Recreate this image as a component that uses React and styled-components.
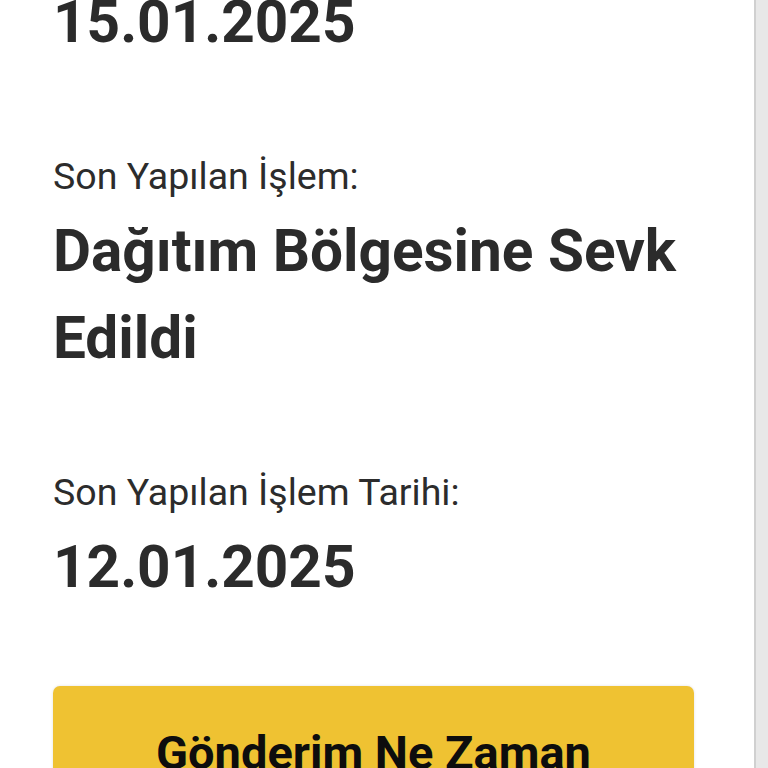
import React from "react";
import styled, { createGlobalStyle } from "styled-components";

const GlobalStyle = createGlobalStyle`
  html, body {
    margin: 0;
    padding: 0;
    background: #ffffff;
    overflow: hidden;
  }
  body {
    font-family: Roboto, "Liberation Sans", sans-serif;
  }
`;

const items = [
  { label: null, value: "15.01.2025" },
  { label: "Son Yapılan İşlem:", value: "Dağıtım Bölgesine Sevk Edildi" },
  { label: "Son Yapılan İşlem Tarihi:", value: "12.01.2025" },
];

const App = () => {
  return (
    <Page>
      <GlobalStyle />
      <Content>
        {items.map((item, i) => (
          <Section key={i}>
            {item.label && <Label>{item.label}</Label>}
            <Value>{item.value}</Value>
          </Section>
        ))}
        <ActionButton type="button">Gönderim Ne Zaman</ActionButton>
      </Content>
      <ScrollTrack />
    </Page>
  );
};

const Page = styled.div`
  display: flex;
  height: 768px;
  overflow: hidden;
`;

const Content = styled.main`
  flex: 1;
  display: flex;
  flex-direction: column;
  gap: 85px;
  padding: 0 60px 0 53px;
  margin-top: -21px;
`;

const Section = styled.section`
  display: flex;
  flex-direction: column;
  gap: 7px;
`;

const Label = styled.div`
  font-size: 37.5px;
  line-height: 50px;
  font-weight: 400;
  color: #2c2c2c;
`;

const Value = styled.div`
  font-size: 58.5px;
  line-height: 87px;
  font-weight: 700;
  color: #2b2b2b;
`;

const ActionButton = styled.button`
  margin-top: -10px;
  height: 140px;
  flex-shrink: 0;
  border: none;
  border-radius: 7px;
  background: #efc232;
  box-shadow: 0 0 3px rgba(0, 0, 0, 0.12);
  font-family: Roboto, "Liberation Sans", sans-serif;
  font-size: 47px;
  line-height: 47px;
  font-weight: 700;
  color: #0d0d0d;
  padding: 43px 20px 0;
  display: flex;
  justify-content: center;
  align-items: flex-start;
`;

const ScrollTrack = styled.div`
  width: 12px;
  flex-shrink: 0;
  background: #e8e8e8;
  border-left: 2px solid #d0d0d0;
`;

export default App;
